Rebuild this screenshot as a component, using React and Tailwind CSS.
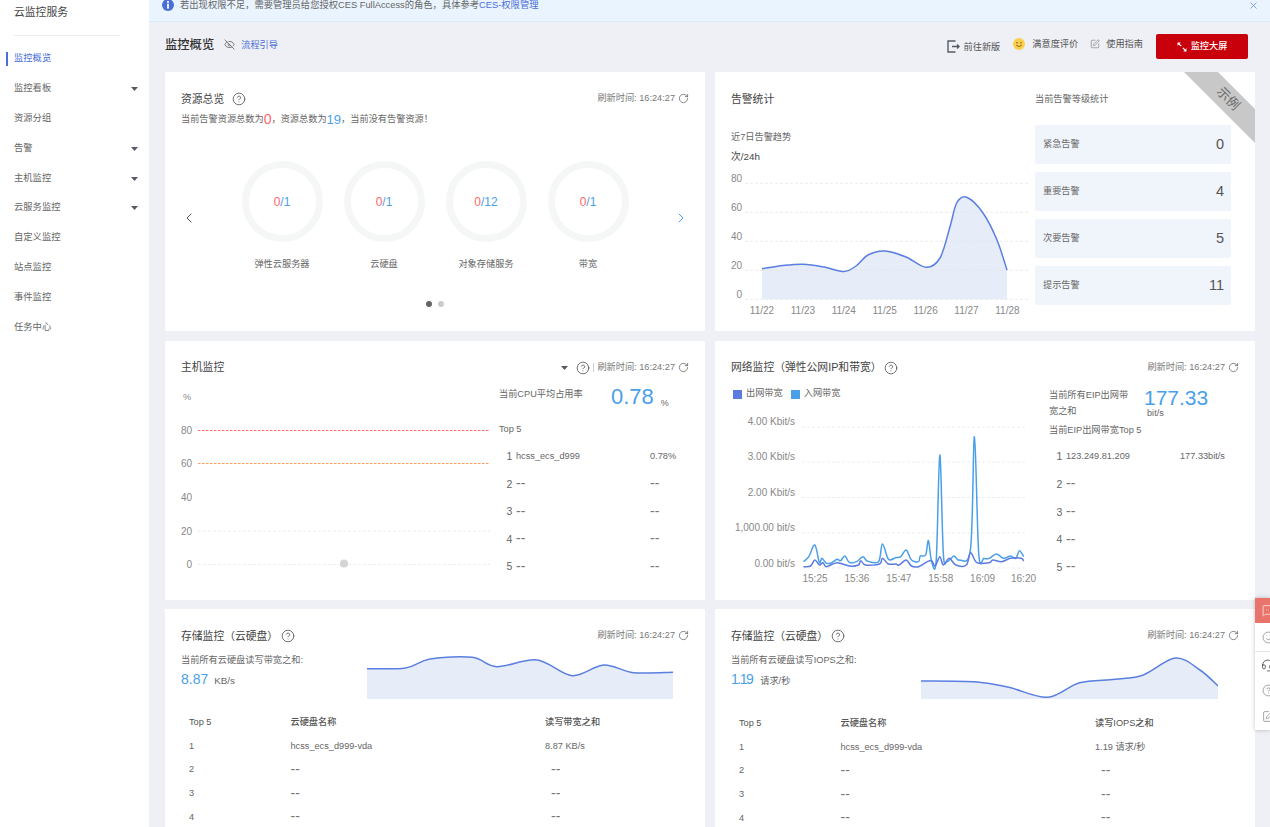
import React from "react";
import { ChevronLeft, ChevronRight, CircleHelp, EyeOff, MessageSquareMore, RotateCw, Smile, SquarePen, X, Headset } from "lucide-react";

const navItems = [
  { name: "监控概览", active: true },
  { name: "监控看板", caret: true },
  { name: "资源分组" },
  { name: "告警", caret: true },
  { name: "主机监控", caret: true },
  { name: "云服务监控", caret: true },
  { name: "自定义监控" },
  { name: "站点监控" },
  { name: "事件监控" },
  { name: "任务中心" },
];

const rings = [
  { label: "弹性云服务器", total: "1" },
  { label: "云硬盘", total: "1" },
  { label: "对象存储服务", total: "12" },
  { label: "带宽", total: "1" },
];

const levels = [
  { name: "紧急告警", count: 0 },
  { name: "重要告警", count: 4 },
  { name: "次要告警", count: 5 },
  { name: "提示告警", count: 11 },
];

// catmull-rom curve through the points, same look as a smooth echarts line
const smooth = (pts) => {
  let d = `M${pts[0][0]} ${pts[0][1]}`;
  for (let i = 0; i < pts.length - 1; i++) {
    const p0 = pts[i - 1] || pts[i];
    const p1 = pts[i];
    const p2 = pts[i + 1];
    const p3 = pts[i + 2] || p2;
    const c1x = p1[0] + (p2[0] - p0[0]) / 6;
    const c1y = p1[1] + (p2[1] - p0[1]) / 6;
    const c2x = p2[0] - (p3[0] - p1[0]) / 6;
    const c2y = p2[1] - (p3[1] - p1[1]) / 6;
    d += ` C${c1x} ${c1y} ${c2x} ${c2y} ${p2[0]} ${p2[1]}`;
  }
  return d;
};

const areaPath = (pts, bottom) =>
  `${smooth(pts)} L${pts[pts.length - 1][0]} ${bottom} L${pts[0][0]} ${bottom} Z`;

const trendPts = [[762, 268.7], [783, 265.5], [803, 264.2], [824, 267], [844, 271.5], [856, 266], [868, 255], [885, 251], [906, 257], [926, 267.3], [940, 258], [950, 226.7], [956.7, 203], [966.7, 197.3], [983, 213], [997, 240], [1007, 270]];

const netScale = (pts) => pts.map(([x, y]) => [715 + x / 2.825, 340 + y / 3]);

const netIn = netScale([[250, 665], [265, 650], [282, 615], [295, 668], [302, 655], [315, 670], [330, 668], [345, 658], [355, 662], [367, 648], [380, 668], [400, 665], [418, 650], [430, 663], [462, 665], [473, 612], [490, 658], [510, 653], [525, 650], [540, 630], [555, 660], [575, 665], [580, 648], [595, 645], [603, 602], [612, 665], [625, 660], [635, 345], [645, 640], [655, 665], [675, 648], [690, 660], [722, 625], [733, 290], [745, 640], [760, 655], [775, 655], [795, 642], [815, 655], [835, 648], [850, 655], [860, 632], [872, 650]]);
const netOut = netScale([[250, 680], [270, 678], [282, 660], [295, 675], [305, 668], [315, 680], [345, 668], [380, 678], [405, 675], [412, 662], [425, 675], [465, 672], [473, 655], [490, 672], [510, 672], [520, 675], [540, 660], [555, 678], [575, 680], [600, 665], [612, 662], [622, 678], [635, 650], [645, 675], [662, 655], [680, 675], [710, 675], [722, 638], [740, 668], [775, 668], [785, 660], [810, 665], [835, 655], [865, 655], [872, 663]]);

const diskBw = [[590, 191], [700, 189], [770, 162], [890, 157], [960, 185], [1075, 165], [1175, 212], [1265, 180], [1350, 203], [1463, 202]].map(([x, y]) => [160 + x / 2.851, 605 + y / 3]);
const diskIops = [[582, 273], [740, 276], [830, 292], [940, 322], [1030, 278], [1130, 268], [1210, 255], [1300, 204], [1370, 240], [1421, 288]].map(([x, y]) => [715 + x / 2.825, 590 + y / 3]);

const Help = ({ className = "" }) => (
  <CircleHelp size={14} strokeWidth={1.4} className={`text-[#555] shrink-0 ${className}`} />
);

const Refresh = () => (
  <div className="flex items-center text-[9.2px] text-[#777]">
    <span>刷新时间: 16:24:27</span>
    <RotateCw size={11} strokeWidth={1.5} className="ml-[3px] text-[#555]" />
  </div>
);

const Caret = () => (
  <svg width="7" height="4" viewBox="0 0 7 4" className="shrink-0">
    <polygon points="0,0 7,0 3.5,4" fill="#555b66" />
  </svg>
);

const Dash = () => <span className="text-[14px] leading-none text-[#777]">--</span>;

const Card = ({ children, className = "" }) => (
  <div className={`relative bg-white rounded-[1px] px-4 pt-[18px] overflow-hidden ${className}`}>{children}</div>
);

const TopRows = ({ rows, nameWidth }) => (
  <div className="mt-[7px]">
    {rows.map((r, i) => (
      <div key={i} className="h-[27.6px] flex items-center text-[9.2px] text-[#666]">
        <span className="ml-[7.5px] w-[9.5px] text-[10.5px]">{i + 1}</span>
        <span className={nameWidth}>{r[0] === "--" ? <Dash /> : r[0]}</span>
        <span>{r[1] === "--" ? <Dash /> : r[1]}</span>
      </div>
    ))}
  </div>
);

const DiskTable = ({ head, value }) => (
  <div className="mt-[11px] text-[9.2px] text-[#666]">
    <div className="grid grid-cols-[101.5px_254.5px_1fr] pl-2 h-[23.7px] items-center text-[#555] font-medium">
      <span>Top 5</span>
      <span>云硬盘名称</span>
      <span>{head}</span>
    </div>
    {[1, 2, 3, 4].map((n) => (
      <div key={n} className="grid grid-cols-[101.5px_254.5px_1fr] pl-2 h-[23.7px] items-center">
        <span>{n}</span>
        <span>{n === 1 ? "hcss_ecs_d999-vda" : <Dash />}</span>
        <span className={n === 1 ? "" : "pl-1.5"}>{n === 1 ? value : <Dash />}</span>
      </div>
    ))}
  </div>
);

const App = () => {
  return (
    <div className="flex w-[1270px] h-[827px] overflow-hidden bg-[#eff0f5] [font-family:'Liberation_Sans','Noto_Sans_CJK_SC',sans-serif]">
      <aside className="w-[149px] shrink-0 bg-white">
        <div className="h-[24px] pl-[14px] flex items-center text-[10.8px] text-[#444]">云监控服务</div>
        <div className="mt-[11px] ml-[14px] w-[106px] h-px bg-[#ececec]" />
        <nav className="mt-[8px]">
          {navItems.map((item) => (
            <div key={item.name} className="relative h-[29.9px] pl-[14px] pr-[11px] flex items-center justify-between text-[9.3px] text-[#666]">
              {item.active && <span className="absolute left-[6px] top-[8px] w-[1.5px] h-[14px] bg-[#4a6fd8]" />}
              <span className={item.active ? "text-[#4a6fd8]" : ""}>{item.name}</span>
              {item.caret && <Caret />}
            </div>
          ))}
        </nav>
      </aside>

      <main className="flex-1 min-w-0">
        <div className="h-[22px] bg-[#eaf4ff] border-b border-[#d9e8fb] flex items-start pl-[13px] pr-[11px] text-[9.3px] text-[#666] overflow-hidden">
          <svg width="12" height="12" viewBox="0 0 12 12" className="-mt-px shrink-0">
            <circle cx="6" cy="6" r="6" fill="#4a6fd8" />
            <rect x="5.1" y="2" width="1.8" height="1.8" fill="#fff" />
            <rect x="5.1" y="4.7" width="1.8" height="5" fill="#fff" />
          </svg>
          <span className="ml-[6px] leading-[10px]">
            {"若出现权限不足\uFF0C需要管理员给您授权CES FullAccess的角色\uFF0C具体参考"}<span className="text-[#4a6fd8]">CES-权限管理</span>
          </span>
          <X size={11} strokeWidth={1.5} className="ml-auto text-[#5b7fe0]" />
        </div>

        <div className="h-[50px] pl-[16px] pr-[22px] flex items-start">
          <h1 className="mt-[14px] text-[12.3px] leading-[18px] font-medium text-[#333]">监控概览</h1>
          <EyeOff size={11} strokeWidth={1.6} className="ml-[10px] mt-[17px] text-[#555]" />
          <span className="ml-[6px] mt-[16px] text-[9.2px] leading-[14px] text-[#4a6fd8]">流程引导</span>
          <div className="ml-auto flex items-start text-[9.2px] text-[#555]">
            <svg width="13" height="13" viewBox="0 0 13 13" className="mt-[18px]" fill="none" stroke="#555b66" strokeWidth="1.4">
              <path d="M8.5 1 H1 V12 H8.5" />
              <path d="M5 6.5 H12 M10 4.5 L12 6.5 L10 8.5" />
            </svg>
            <span className="ml-[4px] mt-[17.5px] leading-[14px]">前往新版</span>
            <svg width="12" height="12" viewBox="0 0 12 12" className="ml-[13px] mt-[15.5px]">
              <circle cx="6" cy="6" r="6" fill="#fbcf4d" />
              <circle cx="4" cy="4.8" r="0.8" fill="#7a5a10" />
              <circle cx="8" cy="4.8" r="0.8" fill="#7a5a10" />
              <path d="M3.2 7.2 Q6 10 8.8 7.2" fill="none" stroke="#7a5a10" strokeWidth="0.9" />
            </svg>
            <span className="ml-[7px] mt-[15px] leading-[14px]">满意度评价</span>
            <SquarePen size={10} strokeWidth={1.3} className="ml-[12px] mt-[16.5px] text-[#666]" />
            <span className="ml-[6px] mt-[15px] leading-[14px]">使用指南</span>
            <button className="ml-[13px] mt-[12px] w-[92px] h-[25px] rounded-[2px] bg-[#c7000b] text-white flex items-center justify-center font-medium">
              <svg width="10" height="10" viewBox="0 0 10 10" className="mr-[4px]">
                <path d="M0.5 0.5 L3.8 0.5 L0.5 3.8 Z M9.5 9.5 L6.2 9.5 L9.5 6.2 Z" fill="#fff" />
                <path d="M2 2 L4.2 4.2 M8 8 L5.8 5.8" stroke="#fff" strokeWidth="1.1" />
              </svg>
              监控大屏
            </button>
          </div>
        </div>

        <div className="grid grid-cols-[540px_540px] grid-rows-[259px_259px_259px] gap-x-[10px] gap-y-[9.5px] pl-[16px]">
          <Card>
            <div className="h-[18px] flex items-center justify-between">
              <div className="flex items-center text-[10.8px] text-[#444]">
                资源总览
                <Help className="ml-[8px]" />
              </div>
              <Refresh />
            </div>
            <div className="mt-[3px] h-[17px] flex items-center text-[9.2px] text-[#666]">
              当前告警资源总数为<span className="text-[14px] text-[#f66]">0</span>{"\uFF0C资源总数为"}<span className="text-[13px] text-[#4a9fe8]">19</span>{"\uFF0C当前没有告警资源\uFF01"}
            </div>
            <div className="mt-[33px] flex justify-between items-start">
              <ChevronLeft size={16} strokeWidth={1.5} className="mt-[48.5px] text-[#555]" />
              <div className="flex gap-[21px]">
                {rings.map((r) => (
                  <div key={r.label} className="w-[81px] flex flex-col items-center">
                    <div className="w-[81px] h-[81px] rounded-full border-[7.5px] border-[#f5f7f7] flex items-center justify-center text-[12px]">
                      <span className="text-[#f66]">0</span>
                      <span className="text-[#4a9fe8]">/{r.total}</span>
                    </div>
                    <span className="mt-[14.5px] h-[14px] leading-[14px] text-[9.2px] text-[#666] whitespace-nowrap">{r.label}</span>
                  </div>
                ))}
              </div>
              <ChevronRight size={16} strokeWidth={1.5} className="mt-[48.5px] text-[#4a9fe8]" />
            </div>
            <div className="mt-[30px] flex justify-center gap-[6px]">
              <span className="w-[6px] h-[6px] rounded-full bg-[#666]" />
              <span className="w-[6px] h-[6px] rounded-full bg-[#ccc]" />
            </div>
          </Card>

          <Card className="flex gap-[7px]">
            <div className="w-[297px] shrink-0">
              <div className="h-[18px] flex items-center text-[10.8px] text-[#444]">告警统计</div>
              <div className="mt-[22px] h-[14px] leading-[14px] text-[9.2px] text-[#666]">近7日告警趋势</div>
              <div className="mt-[6px] h-[14px] leading-[14px] text-[9.8px] text-[#444]">次/24h</div>
              <svg width="297" height="150" viewBox="731 170 297 150" className="mt-[6px] block">
                <path d={areaPath(trendPts, 299.3)} fill="#e6ecf8" />
                {[183.3, 212.3, 241.3, 270.3, 299.3].map((y) => (
                  <line key={y} x1="745" x2="1028" y1={y} y2={y} stroke="#e2e2e2" strokeWidth="0.7" strokeDasharray="3 2" />
                ))}
                <path d={smooth(trendPts)} fill="none" stroke="#5b7fe0" strokeWidth="1.5" />
                {[["80", 182], ["60", 211], ["40", 240], ["20", 269], ["0", 298]].map(([t, y]) => (
                  <text key={t} x="742" y={y} textAnchor="end" fontSize="10" fill="#888">{t}</text>
                ))}
                {["11/22", "11/23", "11/24", "11/25", "11/26", "11/27", "11/28"].map((t, i) => (
                  <text key={t} x={762 + i * 40.9} y="314" textAnchor="middle" fontSize="10" fill="#888">{t}</text>
                ))}
              </svg>
            </div>
            <div className="w-[196px] shrink-0">
              <div className="mt-px h-[18px] flex items-center text-[9.2px] text-[#666]">当前告警等级统计</div>
              <div className="mt-[16px] flex flex-col gap-[8px]">
                {levels.map((l) => (
                  <div key={l.name} className="h-[39px] rounded-[2px] bg-[#f0f4fb] pl-2 pr-[7px] flex items-center justify-between">
                    <span className="text-[9.2px] text-[#666]">{l.name}</span>
                    <span className="text-[14.5px] text-[#555]">{l.count}</span>
                  </div>
                ))}
              </div>
            </div>
            <div className="absolute left-[453px] top-[15px] w-[120px] h-[24px] rotate-45 bg-[#c8c8c8] flex items-center justify-center text-[13px] text-[#666]">
              示例
            </div>
          </Card>

          <Card>
            <div className="h-[18px] flex items-center justify-between">
              <div className="text-[10.8px] text-[#444]">主机监控</div>
              <div className="flex items-center">
                <Caret />
                <Help className="ml-[8px]" />
                <span className="mx-[3px] w-px h-[9px] bg-[#ccc]" />
                <Refresh />
              </div>
            </div>
            <div className="mt-[8px] flex">
              <svg width="318" height="195" viewBox="181 384.5 318 195" className="block shrink-0">
                <line x1="198" x2="490" y1="430" y2="430" stroke="#f66" strokeWidth="1.1" strokeDasharray="2.5 1.5" />
                <line x1="198" x2="490" y1="463" y2="463" stroke="#ff9a5c" strokeWidth="1.1" strokeDasharray="2.5 1.5" />
                <line x1="198" x2="490" y1="530.5" y2="530.5" stroke="#e5e5e5" strokeWidth="0.7" strokeDasharray="3 2" />
                <line x1="198" x2="490" y1="564" y2="564" stroke="#e5e5e5" strokeWidth="0.7" strokeDasharray="3 2" />
                <circle cx="344" cy="563" r="4" fill="#d4d4d4" />
                <text x="187" y="399" textAnchor="middle" fontSize="9.2" fill="#888">%</text>
                {[["80", 433.5], ["60", 466.5], ["40", 500.5], ["20", 534.5], ["0", 567.5]].map(([t, y]) => (
                  <text key={t} x="192" y={y} textAnchor="end" fontSize="10" fill="#888">{t}</text>
                ))}
              </svg>
              <div className="flex-1 text-[#666]">
                <div className="flex items-start h-[37.5px]">
                  <span className="w-[112px] mt-[2.5px] h-[14px] leading-[14px] text-[9.2px]">当前CPU平均占用率</span>
                  <span className="text-[22px] leading-[26px] mt-[-0.5px] text-[#4a9fe8]">0.78</span>
                  <span className="ml-[7px] mt-[12.5px] text-[9px] leading-[12px]">%</span>
                </div>
                <div className="h-[14px] leading-[14px] text-[9.2px]">Top 5</div>
                <TopRows nameWidth="w-[134px]" rows={[["hcss_ecs_d999", "0.78%"], ["--", "--"], ["--", "--"], ["--", "--"], ["--", "--"]]} />
              </div>
            </div>
          </Card>

          <Card>
            <div className="h-[18px] flex items-center justify-between">
              <div className="flex items-center text-[10.8px] text-[#444]">
                {"网络监控\uFF08弹性公网IP和带宽\uFF09"}
                <Help className="ml-[2px]" />
              </div>
              <Refresh />
            </div>
            <div className="flex">
              <div className="w-[318px] shrink-0">
                <div className="mt-[10.5px] h-[14px] flex items-center text-[9.2px] text-[#666] pl-[2px]">
                  <span className="w-[9px] h-[9px] bg-[#5b7be0]" />
                  <span className="ml-[4px]">出网带宽</span>
                  <span className="ml-[8px] w-[9px] h-[9px] bg-[#4a9fe8]" />
                  <span className="ml-[4px]">入网带宽</span>
                </div>
                <svg width="318" height="187" viewBox="731 401 318 187" className="block">
                  {[427, 462, 497.5, 533, 568].map((y) => (
                    <line key={y} x1="802" x2="1026" y1={y} y2={y} stroke="#e5e5e5" strokeWidth="0.7" strokeDasharray="3 2" />
                  ))}
                  {[["4.00 Kbit/s", 425], ["3.00 Kbit/s", 460], ["2.00 Kbit/s", 495.5], ["1,000.00 bit/s", 531], ["0.00 bit/s", 566.5]].map(([t, y]) => (
                    <text key={t} x="795" y={y} textAnchor="end" fontSize="10" fill="#888">{t}</text>
                  ))}
                  {["15:25", "15:36", "15:47", "15:58", "16:09", "16:20"].map((t, i) => (
                    <text key={t} x={i === 5 ? 1023.5 : 815 + i * 41.9} y="582" textAnchor="middle" fontSize="10" fill="#888">{t}</text>
                  ))}
                  <path d={smooth(netIn)} fill="none" stroke="#4a9fe8" strokeWidth="1.5" />
                  <path d={smooth(netOut)} fill="none" stroke="#5b7be0" strokeWidth="1.5" />
                </svg>
              </div>
              <div className="flex-1 text-[#666]">
                <div className="mt-[10.5px] flex items-start h-[35.5px]">
                  <span className="w-[84px] shrink-0 text-[9.2px] leading-[16px]">当前所有EIP出网带宽之和</span>
                  <div className="ml-[11px] flex flex-col">
                    <span className="text-[21px] leading-[24px] -mt-px text-[#4a9fe8]">177.33</span>
                    <span className="ml-[3px] text-[9.2px] leading-[11px] -mt-[2px]">bit/s</span>
                  </div>
                </div>
                <div className="h-[14px] leading-[14px] text-[9.2px]">当前EIP出网带宽Top 5</div>
                <TopRows nameWidth="w-[114px]" rows={[["123.249.81.209", "177.33bit/s"], ["--", ""], ["--", ""], ["--", ""], ["--", ""]]} />
              </div>
            </div>
          </Card>

          <Card>
            <div className="h-[18px] flex items-center justify-between">
              <div className="flex items-center text-[10.8px] text-[#444]">
                {"存储监控\uFF08云硬盘\uFF09"}
                <Help className="ml-[3px]" />
              </div>
              <Refresh />
            </div>
            <div className="flex">
              <div className="w-[186px] shrink-0 pt-[8px]">
                <div className="h-[14px] leading-[14px] text-[9.2px] text-[#666]">当前所有云硬盘读写带宽之和:</div>
                <div className="mt-[3px] flex items-baseline">
                  <span className="text-[14px] leading-[18px] text-[#4a9fe8]">8.87</span>
                  <span className="ml-[6px] text-[9.8px] text-[#666]">KB/s</span>
                </div>
              </div>
              <svg width="306" height="50" viewBox="367 650 306 50" className="mt-[5px] block shrink-0">
                <path d={areaPath(diskBw, 699)} fill="#e6ecf8" />
                <path d={smooth(diskBw)} fill="none" stroke="#5b7fe0" strokeWidth="1.5" />
              </svg>
            </div>
            <DiskTable head="读写带宽之和" value="8.87  KB/s" />
          </Card>

          <Card>
            <div className="h-[18px] flex items-center justify-between">
              <div className="flex items-center text-[10.8px] text-[#444]">
                {"存储监控\uFF08云硬盘\uFF09"}
                <Help className="ml-[3px]" />
              </div>
              <Refresh />
            </div>
            <div className="flex">
              <div className="w-[190px] shrink-0 pt-[8px]">
                <div className="h-[14px] leading-[14px] text-[9.2px] text-[#666]">当前所有云硬盘读写IOPS之和:</div>
                <div className="mt-[3px] flex items-baseline">
                  <span className="text-[14px] leading-[18px] tracking-[-1.5px] text-[#4a9fe8]">1.19</span>
                  <span className="ml-[8px] text-[9.2px] text-[#666]">请求/秒</span>
                </div>
              </div>
              <svg width="297" height="56" viewBox="921 645 297 56" className="block shrink-0">
                <path d={areaPath(diskIops, 699)} fill="#e6ecf8" />
                <path d={smooth(diskIops)} fill="none" stroke="#5b7fe0" strokeWidth="1.5" />
              </svg>
            </div>
            <DiskTable head="读写IOPS之和" value="1.19  请求/秒" />
          </Card>
        </div>
      </main>

      <div className="absolute left-[1255px] top-[598px] w-[15px] h-[132px] bg-white shadow-[0_0_4px_rgba(0,0,0,0.25)] overflow-hidden text-[#666]">
        <div className="h-[25px] bg-[#e8746b] flex items-center pl-[7px] text-white">
          <MessageSquareMore size={13} strokeWidth={1.2} className="shrink-0" />
        </div>
        <div className="h-[29px] flex items-center pl-[7px] border-b border-[#e5e5e5]">
          <Smile size={13} strokeWidth={1.1} className="shrink-0" />
        </div>
        <div className="h-[26px] flex items-center pl-[6px] text-[#444]">
          <Headset size={13} strokeWidth={1.5} className="shrink-0" />
        </div>
        <div className="h-[25px] flex items-center pl-[7px]">
          <CircleHelp size={13} strokeWidth={1.1} className="shrink-0" />
        </div>
        <div className="h-[26px] flex items-center pl-[7px]">
          <SquarePen size={13} strokeWidth={1.1} className="shrink-0" />
        </div>
      </div>
    </div>
  );
};

export default App;
